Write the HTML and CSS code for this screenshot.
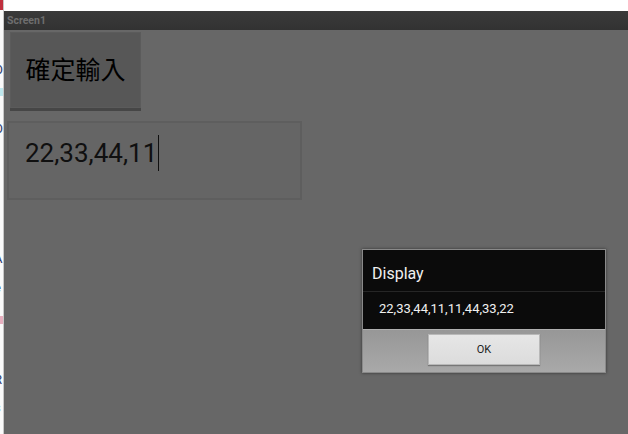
FILE: index.html
```html
<!DOCTYPE html>
<html>
<head>
<meta charset="utf-8">
<link rel="stylesheet" href="styles.css">
</head>
<body>
<div class="page">
  <div class="strip">
    <div class="mark"></div>
    <div class="frag f1">O</div>
    <div class="frag f2"></div>
    <div class="frag f3">O</div>
    <div class="frag f4">A</div>
    <div class="frag f5">e</div>
    <div class="frag f6"></div>
    <div class="frag f7">R</div>
    <div class="frag f8">s</div>
  </div>
  <div class="main">
    <div class="topgap"></div>
    <div class="titlebar">Screen1</div>
    <div class="content">
      <div class="btn">確定輸入</div>
      <div class="textbox"><span class="value">22,33,44,11</span><span class="caret"></span></div>
    </div>
  </div>
</div>
<div class="dialog">
  <div class="dlg-title">Display</div>
  <div class="dlg-msg">22,33,44,11,11,44,33,22</div>
  <div class="dlg-bar"><div class="ok">OK</div></div>
</div>
</body>
</html>
```
FILE: styles.css
```css
html, body {
  margin: 0;
  padding: 0;
  background: #ffffff;
  width: 628px;
  height: 434px;
  overflow: hidden;
  font-family: Roboto, "Noto Sans", sans-serif;
}
.page {
  display: flex;
  height: 434px;
}
.strip {
  width: 3px;
  border-right: 1px solid #c8c8c8;
  background: #fafafa;
  overflow: hidden;
  display: flex;
  flex-direction: column;
}
.mark {
  width: 4px;
  height: 10px;
  background: #c0303e;
  flex: none;
}
.frag {
  flex: none;
  height: 16px;
  font-size: 13px;
  line-height: 16px;
  color: #2c3a70;
  margin-left: -6px;
}
.f1 { margin-top: 52px; }
.f2 { margin-top: 10px; height: 8px; width: 12px; background: #bfe8ee; }
.f3 { margin-top: 25px; }
.f4 { margin-top: 114px; }
.f5 { margin-top: 13px; }
.f6 { margin-top: 20px; height: 8px; width: 12px; background: #e8b0c0; }
.f7 { margin-top: 48px; }
.f8 { margin-top: 12px; }
.main {
  flex: 1;
  display: flex;
  flex-direction: column;
}
.topgap {
  height: 11px;
  background: #ffffff;
}
.titlebar {
  height: 19px;
  background: linear-gradient(#3a3a3a, #323232);
  color: #6e6e6e;
  font-weight: bold;
  font-size: 10.5px;
  line-height: 19px;
  padding-left: 3px;
}
.content {
  flex: 1;
  background: #676767;
  padding: 2px 0 0 3px;
  display: flex;
  flex-direction: column;
  align-items: flex-start;
}
.btn {
  margin-left: 3px;
  background: #575757;
  border: 1px solid #5b5b5b;
  box-shadow: 0 3px 0 #464646;
  color: #000;
  font-family: Roboto, "Noto Sans CJK TC", sans-serif;
  font-size: 25px;
  display: flex;
  align-items: center;
  justify-content: center;
  padding-bottom: 4px;
  box-sizing: border-box;
  height: 76px;
  width: 131px;
}
.textbox {
  margin-top: 13px;
  border: 2px solid #5e5e5e;
  background: #656565;
  display: flex;
  align-items: center;
  padding-left: 16px;
  padding-bottom: 16px;
  box-sizing: border-box;
  height: 79px;
  width: 295px;
}
.value {
  font-size: 26px;
  color: #101010;
}
.caret {
  width: 1px;
  height: 36px;
  background: #101010;
  margin-left: 1px;
}
.dialog {
  position: absolute;
  left: 362px;
  top: 249px;
  width: 242px;
  height: 122px;
  border: 1px solid #8a8a8a;
  background: #0b0b0b;
  box-shadow: 0 0 3px rgba(0,0,0,0.5);
  display: flex;
  flex-direction: column;
}
.dlg-title {
  height: 41px;
  border-bottom: 1px solid #262626;
  color: #f0f0f0;
  font-size: 16px;
  line-height: 48px;
  padding-left: 9px;
}
.dlg-msg {
  height: 37px;
  color: #f0f0f0;
  font-size: 13px;
  line-height: 33px;
  padding-left: 16px;
}
.dlg-bar {
  flex: 1;
  background: linear-gradient(#979797, #a9a9a9);
  border-top: 1px solid #b0b0b0;
  display: flex;
  justify-content: center;
  padding-top: 4px;
}
.ok {
  width: 110px;
  height: 29px;
  background: linear-gradient(#e6e6e6, #dcdcdc);
  border: 1px solid #b8b8b8;
  box-shadow: 0 1px 1px #777;
  color: #222;
  font-size: 11px;
  display: flex;
  align-items: center;
  justify-content: center;
}
```
